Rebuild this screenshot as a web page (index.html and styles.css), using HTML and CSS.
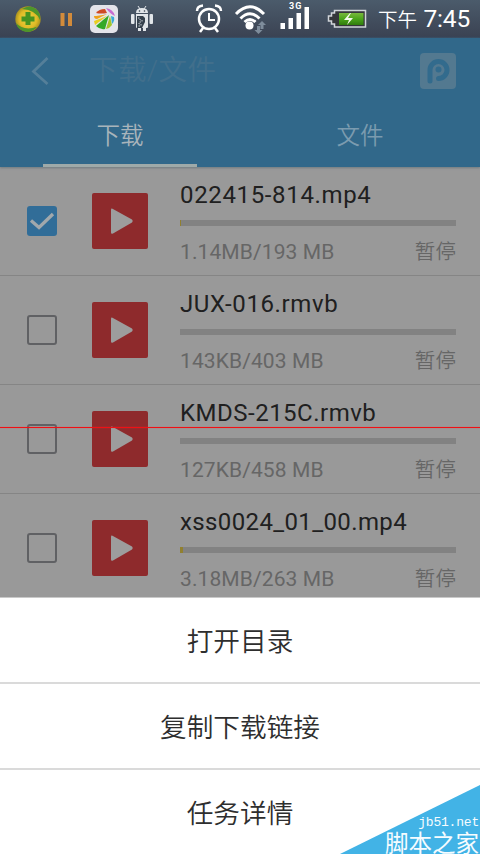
FILE: index.html
```
<!DOCTYPE html>
<html lang="zh-CN">
<head>
<meta charset="utf-8">
<title>下载</title>
<link rel="stylesheet" href="styles.css">
</head>
<body>
<svg class="defs" width="0" height="0">
  <symbol id="video" viewBox="0 0 56 56"><rect width="56" height="56" rx="2" fill="#8e2a2c"/><path d="M19 16.500Q19 15 20.500 15.700L40 26.500Q41.500 28 40 29.500L21 40.500Q19 41.500 19 39.500Z" fill="#9d9d9d"/></symbol>
</svg>
<div class="phone">
  <div class="status">
    <svg class="status-icons" width="372" height="38" viewBox="0 0 372 38">
      <defs><radialGradient id="ball"><stop offset="0" stop-color="#e5d348"/><stop offset=".7" stop-color="#e0bb25"/><stop offset="1" stop-color="#a89220"/></radialGradient><linearGradient id="charge" x2="0" y2="1"><stop stop-color="#78b83c"/><stop offset=".5" stop-color="#4aa41b"/><stop offset="1" stop-color="#2f7c0c"/></linearGradient></defs>
      <circle cx="28" cy="19" r="12.700" fill="url(#ball)"/>
      <path d="M22 9Q30 4 36 9Q41 13 40 20Q36 10 22 9ZM16 23Q22 30 33 28Q38 26 36 28Q32 32 27 32Q18 31 16 23Z" fill="#4c962b"/>
      <path d="M25.500 12h5v4.500h4v5h-4V25h-5v-3.500h-4v-5h4z" fill="#469320"/>
      <path d="M60.500 13h4v13h-4zM68 13h4v13h-4z" fill="#d28b3b"/>
      <rect x="90" y="5" width="28" height="28" rx="5" fill="#e4e4ea"/>
      <path d="M96 13Q99 9 105 9L107 13Q101 14 96 13Z" fill="#d04924"/>
      <path d="M106 8Q113 9 115 16Q110 14 106 8Z" fill="#c86bd0"/>
      <path d="M94 16Q98 16 107 14L97 19Q94 19 94 16Z" fill="#efa11b"/>
      <path d="M94 21L107 16L95 25Z" fill="#e9ce20"/>
      <path d="M109 15L96 26Q100 30 105 29Z" fill="#35a927"/>
      <path d="M110 16L106 29Q110 28 112 25Z" fill="#a4c52a"/>
      <path d="M111 16L112 24Q115 21 114 17Z" fill="#39aad4"/>
      <g fill="#e1e5e9"><path d="M136 13Q136 8 142 8T148 13ZM136 14h12v13q0 1-1 1h-1v3h-3v-3h-2v3h-3v-3h-1q-1 0-1-1z"/><rect x="131" y="14" width="3.500" height="10" rx="1"/><rect x="149.500" y="14" width="3.500" height="10" rx="1"/><path d="M138 6l2 3M146 6l-2 3" stroke="#e1e5e9"/></g>
      <g fill="#34404c"><circle cx="139.500" cy="11" r=".8"/><circle cx="144.500" cy="11" r=".8"/><path d="M137 16h6l2 2v4l-3 6h-5z"/></g><path d="M138 18h2v2h2v2h-3v2h2v2h-3" fill="none" stroke="#c5cbd0" stroke-dasharray="1.500 1.500"/>
      <g fill="none" stroke="#fff" stroke-width="2.500"><circle cx="209" cy="19" r="10"/><path d="M209 13v7h6" stroke-width="2"/><path d="M197 11Q197 6 203 5.500M221 11Q221 6 215 5.500" stroke-width="2.500"/><path d="M203 28l-3 4M215 28l3 4"/></g>
      <g fill="none" stroke="#fff" stroke-width="3"><path d="M236 14Q250 -.500 264 14M240.500 18.500Q250 9 259.500 18.500M244.500 22Q250 17 255.500 22"/></g><circle cx="249.500" cy="25.500" r="4" fill="#fff"/>
      <path d="M254.500 30l4 4 4-4h-2.500v-4h-3v4zM258 25l4-4 4 4h-2.500v4h-3v-4z" fill="#7e8c9b"/>
      <g fill="#fff"><path d="M280.500 23h4.500v6h-4.500zM288.500 18h4.500v11h-4.500zM296.500 13h4.500v16h-4.500zM304.500 7h4.500v22h-4.500z"/></g>
      <text x="289" y="9" class="network">3G</text>
      <path d="M334.500 10.500h31v16.500h-31v-3h-3v-3h-3v-5h3v-3h3z" fill="#34363a" stroke="#d1d5da" stroke-width="1.500"/><path d="M339 13h24.500v12H339z" fill="url(#charge)"/><path d="M350 13l-6 7h5l-2 5 6-7h-5l3-5z" fill="#f5faed"/>
    </svg>
    <div class="clock"><span class="noon">下午</span><span class="time">7:45</span></div>
  </div>
  <header class="header">
    <div class="titlebar">
      <svg class="back" width="20" height="32" viewBox="0 0 20 32"><path d="M17.500 3L3.500 16.500L17.500 29" fill="none" stroke="#557f99" stroke-width="2.800"/></svg>
      <span class="title">下载/文件</span>
      <svg class="brand" width="36" height="36" viewBox="0 0 36 36"><rect width="36" height="36" rx="4" fill="#537990"/><path d="M10 28V17a8.500 8.500 0 1 1 8.500 8.500" fill="none" stroke="#326b8d" stroke-width="5" stroke-linecap="round"/><circle cx="18.500" cy="16.500" r="3" fill="#326b8d"/></svg>
    </div>
    <nav class="tabs"><div class="tab active"><span>下载</span></div><div class="tab"><span>文件</span></div></nav>
  </header>
  <main class="list">
    <div class="row"><div class="check on"><svg width="30" height="30" viewBox="0 0 30 30"><path d="M4 14.500l8 7L26 8" fill="none" stroke="#a1a8ac" stroke-width="3.300"/></svg></div><svg class="thumb"><use href="#video"/></svg><div class="info"><div class="name n1">022415-814.mp4</div><div class="progress"><i style="width:1px"></i></div><div class="meta"><span>1.14MB/193 MB</span><span class="state">暂停</span></div></div></div>
    <div class="row"><div class="check"></div><svg class="thumb"><use href="#video"/></svg><div class="info"><div class="name n2">JUX-016.rmvb</div><div class="progress"></div><div class="meta"><span>143KB/403 MB</span><span class="state">暂停</span></div></div></div>
    <div class="row"><div class="check"></div><svg class="thumb"><use href="#video"/></svg><div class="info"><div class="name n3">KMDS-215C.rmvb</div><div class="progress"></div><div class="meta"><span>127KB/458 MB</span><span class="state">暂停</span></div></div></div>
    <div class="row"><div class="check"></div><svg class="thumb"><use href="#video"/></svg><div class="info"><div class="name n4">xss0024_01_00.mp4</div><div class="progress"><i style="width:3px"></i></div><div class="meta"><span>3.18MB/263 MB</span><span class="state">暂停</span></div></div></div>
  </main>
  <div class="sheet"><div class="action">打开目录</div><div class="action">复制下载链接</div><div class="action">任务详情</div></div>
  <div class="memory"><svg width="22" height="17" viewBox="0 0 22 17"><path d="M1 5.500Q11-2 21 5.500M5.500 10Q11 5.500 16.500 10" fill="none" stroke="#e8eef1" stroke-width="2"/><circle cx="11" cy="13.500" r="2" fill="#fff"/></svg><i class="level"></i><span>105M</span></div>
  <div class="scanline"></div>
  <div class="watermark"><svg width="140" height="69" viewBox="0 0 140 69"><path d="M0 69L140 0V69Z" fill="#42b3e6"/></svg><div class="site"><span class="domain">jb51.net</span><span class="sitename">脚本之家</span></div></div>
</div>
</body>
</html>
```

FILE: styles.css
```
* { box-sizing: border-box; }
body { margin: 0; font-family: Roboto, "Noto Sans CJK SC", sans-serif; }
.defs { position: absolute; }
.phone { position: relative; width: 480px; height: 854px; overflow: hidden; background: #999; display: flex; flex-direction: column; }
.status { height: 38px; flex: none; display: flex; background: linear-gradient(#4b5b6b, #3b4353 95%, #354c63); color: #fff; }
.status-icons { flex: none; }
.network { font: bold 9px Roboto, sans-serif; letter-spacing: 1px; fill: #fff; }
.clock { flex: 1; display: flex; align-items: center; justify-content: space-between; padding: 0 10px 0 6px; white-space: nowrap; }
.noon { font: 350 19.5px/38px "Noto Sans CJK SC", sans-serif; }
.time { font-size: 24.5px; line-height: 38px; letter-spacing: -.2px; }
.header { height: 129px; flex: none; background: #31688a; box-shadow: 0 1px 2px #707b80; z-index: 1; }
.titlebar { height: 66px; display: flex; align-items: center; padding: 0 24px 0 30px; }
.title { margin-left: 39px; flex: 1; color: #416f8c; font-size: 28.5px; line-height: 40px; font-weight: 350; letter-spacing: .4px; }
.tabs { height: 63px; display: flex; }
.tab { flex: 1; display: flex; justify-content: center; color: #7b9baf; font-size: 23.5px; line-height: 64px; }
.tab span { font-weight: 350; }
.active { color: #a8b4bb; }
.active span { width: 154px; height: 63px; text-align: center; border-bottom: 3px solid #9eaaa9; }
.list { height: 430px; flex: none; overflow: hidden; }
.row { height: 109px; display: flex; align-items: center; padding: 0 24px 0 27px; border-bottom: 1px solid #858585; }
.check { width: 30px; height: 30px; border: 2px solid #606164; border-radius: 3px; flex: none; }
.check.on { border: 0; background: #316d98; }
.check svg { display: block; }
.thumb { width: 56px; height: 56px; margin: 0 32px 0 35px; flex: none; }
.info { flex: 1; height: 108px; padding-top: 12px; }
.name { height: 32px; font-size: 24px; line-height: 32px; color: #202020; white-space: nowrap; }
.n1 { letter-spacing: .65px; }
.n2 { letter-spacing: .6px; }
.n3 { letter-spacing: .5px; }
.n4 { letter-spacing: .38px; }
.progress { height: 6px; margin-top: 9px; background: #828282; }
.progress i { display: block; height: 6px; background: #91802f; }
.meta { display: flex; justify-content: space-between; margin-top: 10px; font-size: 21px; line-height: 32px; letter-spacing: .1px; color: #666; }
.state { font-size: 20.5px; font-weight: 350; line-height: 33px; }
.sheet { height: 257px; background: #fff; flex: none; border-top: 1px solid #c9c9c9; }
.action { height: 86px; border-bottom: 2px solid #dadada; text-align: center; font-size: 26.67px; line-height: 88px; color: #2e2e2e; font-weight: 350; }
.action:last-child { border: 0; }
.memory { position: absolute; left: 68px; top: 40px; width: 118px; height: 30px; border-radius: 4px; background: #193448; color: #f1f4f5; display: flex; align-items: center; padding-left: 15px; }
.level { width: 19px; height: 26px; border-radius: 3px; background: #306d2a; margin-left: 7px; }
.memory span { font-size: 17px; margin-left: -5px; letter-spacing: .2px; }
.scanline { position: absolute; left: 0; top: 427px; width: 480px; height: 1px; background: #f01014; box-shadow: 0 0 1px #e84040; }
.watermark { position: absolute; right: 0; bottom: 0; width: 140px; height: 69px; }
.watermark svg { display: block; }
.site { position: absolute; right: 1px; bottom: 0; color: #f6fcff; display: flex; flex-direction: column; align-items: flex-end; white-space: nowrap; }
.domain { font: 13px/14px "Liberation Sans Narrow", "Liberation Mono", monospace; letter-spacing: -.2px; }
.sitename { font: 400 23.5px/24px "Noto Sans CJK SC", sans-serif; }
```
